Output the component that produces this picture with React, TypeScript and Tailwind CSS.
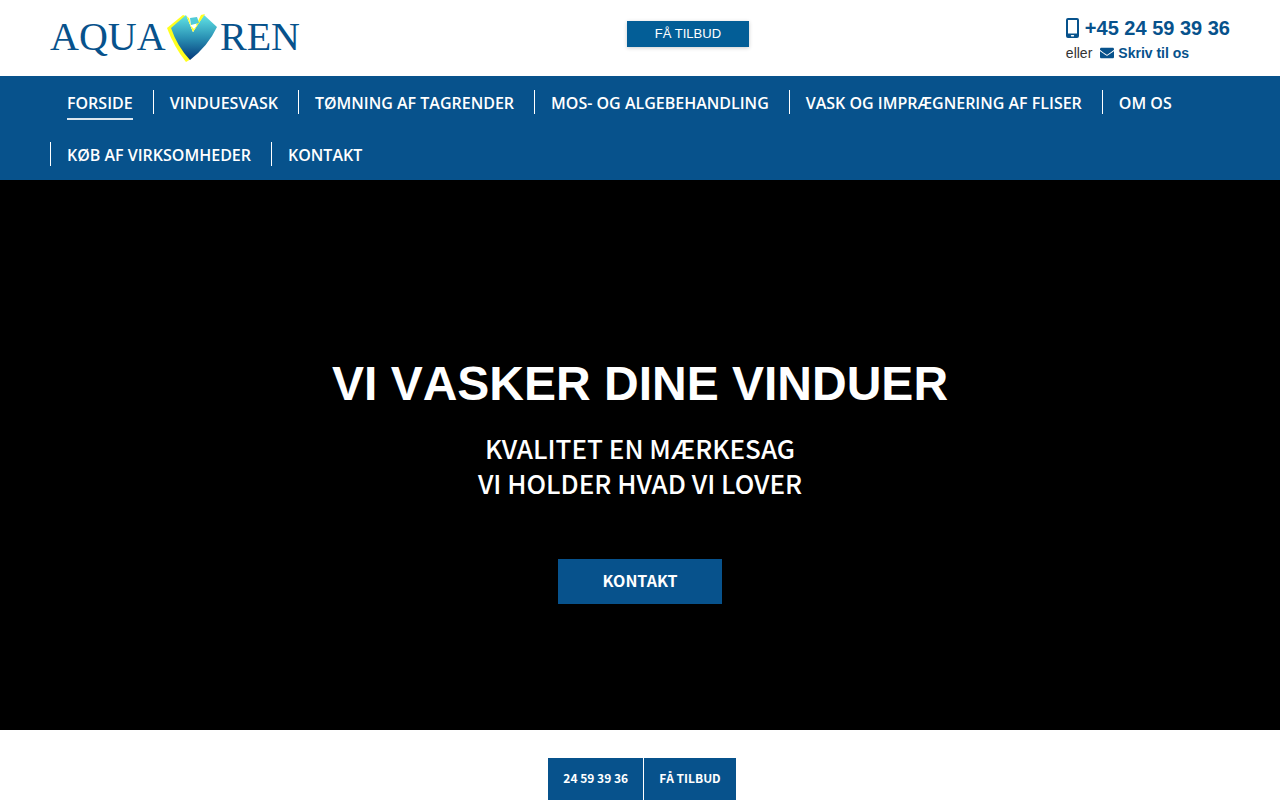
import React from "react";
import { FaEnvelope } from "react-icons/fa";

interface NavItem {
  label: string;
  href: string;
}

const navItems: NavItem[] = [
  { label: "FORSIDE", href: "#forside" },
  { label: "VINDUESVASK", href: "#vinduesvask" },
  { label: "TØMNING AF TAGRENDER", href: "#tagrender" },
  { label: "MOS- OG ALGEBEHANDLING", href: "#algebehandling" },
  { label: "VASK OG IMPRÆGNERING AF FLISER", href: "#fliser" },
  { label: "OM OS", href: "#om-os" },
  { label: "KØB AF VIRKSOMHEDER", href: "#virksomheder" },
  { label: "KONTAKT", href: "#kontakt" },
];

const Logo = () => (
  <a
    href="#forside"
    aria-label="Aqua Ren"
    className="flex items-center font-['Liberation_Serif',serif] text-[40px] leading-[46px] text-[#07528c]"
  >
    <span className="w-[116px] pb-0.5">AQUA</span>
    <svg width="52" height="50" viewBox="0 0 52 50" aria-hidden="true">
      <defs>
        <linearGradient id="drop" x1="0" y1="0" x2="0" y2="1">
          <stop offset="0" stopColor="#62e4e6" />
          <stop offset="0.5" stopColor="#2b93b5" />
          <stop offset="1" stopColor="#04387a" />
        </linearGradient>
      </defs>
      <path d="M17 2 L1 15 Q8 34 20 49 L25 46 L22 4 Z" fill="#ffff1e" />
      <path
        d="M20 2 L5 15 Q11 33 24 47 Q42 33 51 14 L38 2 L27 19 Z"
        fill="url(#drop)"
      />
      <path d="M21 4 L27 19 L37 2 L34 1 L31 5 L24 6 Z" fill="#fff" />
      <path d="M21 4 L23 5 L25 13 L29 14 L35 2 L39 1 L27 19 Z" fill="#ffff1e" />
      <path d="M25 13 L31 12 L28 16 Z" fill="#fff" />
      <path d="M24 5 L31 4 L33 10 L25 12 Z" fill="#51cbd8" />
    </svg>
    <span className="ml-0.5 pb-0.5">REN</span>
  </a>
);

const MobileIcon = () => (
  <svg width="13" height="20" viewBox="0 0 13 20" aria-hidden="true">
    <path
      fill="currentColor"
      fillRule="evenodd"
      d="M2 0H11A2 2 0 0 1 13 2V18A2 2 0 0 1 11 20H2A2 2 0 0 1 0 18V2A2 2 0 0 1 2 0ZM2 2V15.500H11V2ZM5.500 17A.7.7 0 0 0 5.500 18.400H7.500A.7.7 0 0 0 7.500 17Z"
    />
  </svg>
);

const Header = () => (
  <header className="flex items-center justify-between px-[50px] h-[76px] bg-white">
    <Logo />
    <div className="pl-2.5 pb-2">
      <button
        type="button"
        className="w-[122px] h-[26px] bg-[#035e97] text-white text-[13px] leading-[26px] shadow-[0_1px_4px_rgba(0,0,0,0.2)]"
      >
        FÅ TILBUD
      </button>
    </div>
    <div className="pt-0.5 text-sm text-[#333]">
      <a
        href="tel:+4524593936"
        className="flex items-center gap-1.5 text-xl leading-7 font-bold text-[#07528c]"
      >
        <MobileIcon />
        +45 24 59 39 36
      </a>
      <p className="flex items-center gap-2 leading-[22px]">
        eller
        <a
          href="#skriv"
          className="flex items-center gap-1 font-bold text-[#07528c]"
        >
          <FaEnvelope className="w-3.5 h-3.5" />
          Skriv til os
        </a>
      </p>
    </div>
  </header>
);

const Navigation = () => (
  <nav className="bg-[#07528c] px-[50px]">
    <ul className="flex flex-wrap font-['Open_Sans',sans-serif] text-base leading-[26px] font-semibold text-white">
      {navItems.map((item, index) => (
        <li
          key={item.label}
          className={`my-3.5 h-6 pl-4 pr-5 border-l ${
            index === 0 ? "border-transparent" : "border-white"
          }`}
        >
          <a
            href={item.href}
            className={
              index === 0
                ? "relative block after:absolute after:inset-x-0 after:-bottom-1 after:h-0.5 after:bg-white/85"
                : "block"
            }
          >
            {item.label}
          </a>
        </li>
      ))}
    </ul>
  </nav>
);

const Hero = () => (
  <section className="flex flex-col items-center bg-black pt-[175px] pb-[126px] text-center text-white">
    <h1 className="text-5xl leading-[58px] font-bold [font-kerning:none]">
      VI VASKER DINE VINDUER
    </h1>
    <p className="mt-[17px] font-['Noto_Sans_CJK_SC',sans-serif] text-[26px] leading-[35px] font-medium">
      KVALITET EN MÆRKESAG
      <br />
      VI HOLDER HVAD VI LOVER
    </p>
    <a
      href="#kontakt"
      className="mt-[59px] w-[164px] bg-[#07528c] pb-0.5 font-['Noto_Sans_CJK_SC',sans-serif] text-base leading-[43px] font-bold"
    >
      KONTAKT
    </a>
  </section>
);

const ActionBar = () => (
  <div className="mt-7 flex justify-center gap-px pl-1 font-['Noto_Sans_CJK_SC',sans-serif] text-xs leading-10 font-bold text-white [font-kerning:none]">
    <a href="tel:24593936" className="bg-[#07528c] px-[15px] pb-0.5">
      24 59 39 36
    </a>
    <a href="#tilbud" className="bg-[#07528c] px-[15px] pb-0.5">
      FÅ TILBUD
    </a>
  </div>
);

const App = () => (
  <div className="bg-white font-['Liberation_Sans',Arial,sans-serif]">
    <Header />
    <Navigation />
    <main>
      <Hero />
      <ActionBar />
    </main>
  </div>
);

export default App;
